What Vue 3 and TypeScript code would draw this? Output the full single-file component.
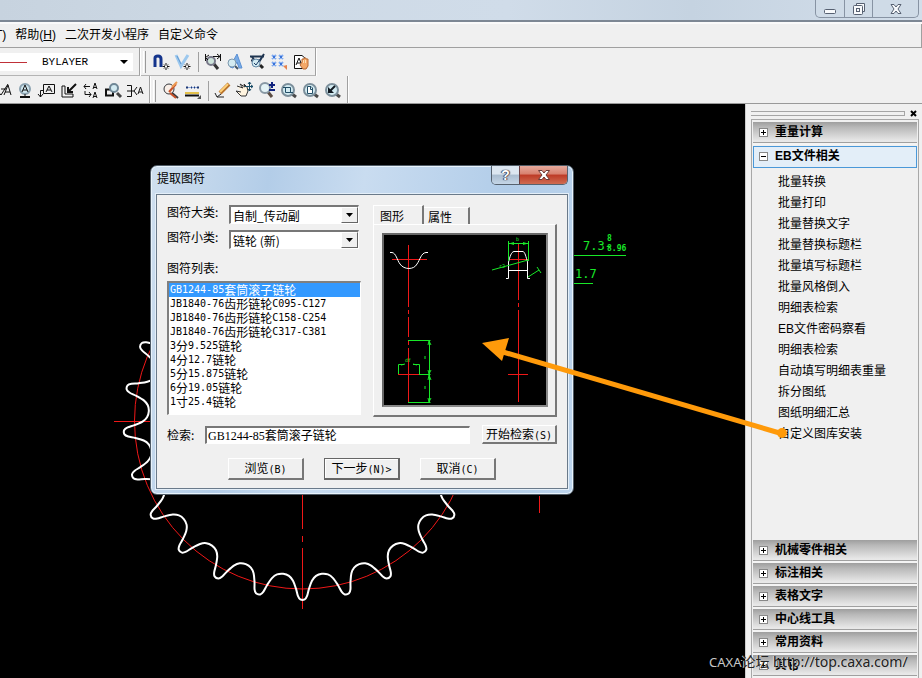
<script setup lang="ts">
import { ref } from 'vue'

interface Shape { d: string; s?: string; f?: string; w?: number }
interface Tool { name: string; shapes: Shape[] }

const lens = (x: number, y: number, r: number): string =>
  `M${x - r} ${y}a${r} ${r} 0 1 0 ${2 * r} 0a${r} ${r} 0 1 0 ${-2 * r} 0`
const INK = '#111'
const STEEL = '#6f8796'
const GLASS = '#d3ebf2'

const zoomGlass = (extra: Shape[]): Shape[] => [
  { d: 'M13 13L17 16', s: '#4a4a4a', w: 3 },
  { d: lens(9, 9, 6), s: '#7c8f9b', f: GLASS, w: 2 },
  ...extra,
]

const snapTools: Tool[] = [
  { name: '捕捉', shapes: [
    { d: 'M4 15V6Q4 4 7 4T10 7V15', s: '#14348c', w: 3 },
    { d: 'M15 11V18M11.500 14.500H18.500M13 12.500L17 16.500M17 12.500L13 16.500', s: INK },
    { d: 'M14 13.500H16V15.500H14Z', f: '#fff' } ] },
  { name: '导航', shapes: [
    { d: 'M3 3L8 14L15 3', s: '#9cc8ee', w: 3 }, { d: 'M4 4L8 12', s: '#5f97d0' },
    { d: 'M14 11V18M10.500 14.500H17.500M12 12.500L16 16.500M16 12.500L12 16.500', s: INK },
    { d: 'M13 13.500H15V15.500H13Z', f: '#fff' } ] },
]
const queryTools: Tool[] = [
  { name: '两点距离', shapes: [
    { d: 'M11 12L15 17', s: '#333', w: 3 }, { d: lens(8, 9, 4), s: '#778', f: '#cfe5dc', w: 2 },
    { d: 'M2.500 2V9M17.500 2V9M10 4.500H17M14 2L17 4.500L14 7M6 3L2.500 5.500L5 8', s: INK } ] },
  { name: '角度', shapes: [
    { d: 'M5 15L12 2L17 16H14L12 10L8 16Z', f: '#78abe6', s: '#5a90d4' },
    { d: 'M10 14L13 17', s: '#456', w: 2 }, { d: lens(7, 11, 4), s: '#7c97ad', f: GLASS } ] },
  { name: '坐标', shapes: [
    { d: 'M3 4.500H17M4 8.500H12M5 5L9 10M12 10L17 2', s: '#1f3550', w: 2 }, { d: 'M13 13L16 16', s: '#222', w: 3 },
    { d: lens(9, 11, 4), s: '#6287a5', f: GLASS }, { d: 'M7 11L9 13L14 6', s: '#1d3d66' } ] },
  { name: '属性', shapes: [
    { d: 'M3 3L7 7M7 3L3 7M10 3L14 7M14 3L10 7M3 10L7 14M7 10L3 14M10 10L14 14M14 10L10 14', s: '#7faaf0', w: 2 },
    { d: 'M4 5H6M11 5H13M4 12H6M11 12H13', s: '#3a73d8', w: 2 },
    { d: 'M14 14L18 13V18Z', f: '#e58450' } ] },
  { name: '拾取', shapes: [
    { d: 'M3.500 3.500H11L15 7V16.500H3.500Z', s: INK, f: '#fff' }, { d: 'M5 13L8 6L10 11M6 11H10', s: INK },
    { d: 'M9 13L11 10V7H13V6H15V7H17V14L15 17H12Z', f: '#f4a868', s: '#b86a34' }, { d: 'M12.500 8V11M14.500 8V11', s: '#ffe0b5' } ] },
]
const markTools: Tool[] = [
  { name: '粗糙度', shapes: [{ d: 'M1 6L8 14L15 3M8 8H13M11 14L15 4L18 14M12 11H17', s: INK }] },
  { name: '基准代号', shapes: [
    { d: lens(10, 8, 5), s: '#8ba2b0', f: '#cfe6ee', w: 2 }, { d: 'M7 11L10 4L13 11M8 9H12M10 13V16', s: INK },
    { d: 'M5 16H15', s: INK, w: 2 } ] },
  { name: '形位公差', shapes: [{ d: 'M6.500 3.500H17.500V12.500H6.500ZM9 11L12 5L15 11M10 9H14M6.500 9.500H3.500V16M1 13L3.500 16L6 13', s: INK }] },
  { name: '焊接符号', shapes: [{ d: 'M3 5V16H14V13H6V5Z', s: INK }, { d: 'M17 3L10 10M9 6V11H14', s: INK, w: 2 }] },
  { name: '剖切符号', shapes: [{ d: 'M3 5.500H9M5 3L3 5.500L5 8M4 10V13.500H10M8 11L10 13.500L8 16M12 8L14 2L16 8M13 6.500H16M12 17L14 11L16 17M13 15.500H16', s: INK }] },
  { name: '局部放大', shapes: [
    { d: 'M3 8.500H10V14.500H3Z', s: INK, w: 2 }, { d: 'M14 12L18 16', s: '#444', w: 3 },
    { d: lens(11, 7, 4), s: STEEL, f: GLASS, w: 2 } ] },
  { name: '引出说明', shapes: [{ d: 'M2 4.500H6.500V15.500H2M2 10H9M12 6L9 10L12 14M13 13L15.500 6L18 13M14 11H17', s: INK }] },
]
const editTools: Tool[] = [
  { name: '重画', shapes: [
    { d: 'M10 11L17 17', s: '#35383d', w: 2 }, { d: lens(8, 8, 5), s: '#35383d', f: '#f9efe8' },
    { d: 'M8 11L15 3M9 12L15 17', s: '#c65129', w: 2 }, { d: 'M11 6L16 1', s: '#ed9a52', w: 2 } ] },
  { name: '线宽', shapes: [
    { d: 'M3 6.500H16', s: '#8da8dc' }, { d: 'M3 6.500H5M8 6.500H9M11 6.500H12M14 6.500H16', s: '#1c3774', w: 2 },
    { d: 'M2 12H16', s: '#e4c14a', w: 2 }, { d: 'M2 14.500H16', s: INK, w: 2 }, { d: 'M18 14V18H14Z', f: '#555' } ] },
]
const viewTools: Tool[] = [
  { name: '画笔', shapes: [
    { d: 'M7 12L16 3', s: '#b8732c', w: 4 }, { d: 'M7 11L15 3', s: '#ffd179', w: 2 },
    { d: 'M2 12L4 16L8 13', s: '#222' }, { d: 'M4 16H11', s: '#222' } ] },
  { name: '平移', shapes: [
    { d: 'M2 5L8 7L5 3L10 6L9 3L12 6L13 10L11 15H6L3 12L1 10L6 11', s: '#333', f: '#fff4df' },
    { d: 'M14.500 1V10M10 5.500H18M13 3L14.500 1L16 3M16 4L18 5.500L16 7M13 8L14.500 10L16 8', s: '#174a65' } ] },
  { name: '缩放', shapes: [
    { d: 'M11 11L15 16', s: '#5c4d43', w: 3 }, { d: lens(8, 7, 5), s: '#8898a4', f: '#e4f3f6', w: 2 },
    { d: 'M12 4H18M15 1V7M12 9H18', s: '#11237e', w: 2 } ] },
  { name: '窗口缩放', shapes: zoomGlass([{ d: 'M6.500 6.500H11.500V11.500H6.500ZM4 6.500H7M11 11.500H14', s: '#234e66' }]) },
  { name: '显示全部', shapes: zoomGlass([{ d: 'M6.500 5.500H10L11.500 7V12.500H6.500ZM9.500 6V8.500H11', s: '#234e66', f: '#fff' }]) },
  { name: '显示上一步', shapes: zoomGlass([{ d: 'M7 10L12 5', s: '#101820', w: 2 }, { d: 'M5 6V12H11Z', f: '#101820' }]) },
]

const lineType = ref('BYLAYER')
const category = ref('自制_传动副')
const subCategory = ref('链轮 (新)')
const query = ref('GB1244-85套筒滚子链轮')
const selected = ref(0)
const tab = ref('图形')
const symbols: string[] = [
  'GB1244-85套筒滚子链轮', 'JB1840-76齿形链轮C095-C127', 'JB1840-76齿形链轮C158-C254',
  'JB1840-76齿形链轮C317-C381', '3分9.525链轮', '4分12.7链轮', '5分15.875链轮', '6分19.05链轮', '1寸25.4链轮',
]
const runs = (t: string): string[] => t.match(/[\x20-\x7e]+|[^\x20-\x7e]+/g) ?? []
const isLatin = (t: string): boolean => /^[\x20-\x7e]/.test(t)

const commands: string[] = [
  '批量转换', '批量打印', '批量替换文字', '批量替换标题栏', '批量填写标题栏', '批量风格倒入', '明细表检索',
  'EB文件密码察看', '明细表检索', '自动填写明细表重量', '拆分图纸', '图纸明细汇总', '自定义图库安装',
]
const sections: string[] = ['机械零件相关', '标注相关', '表格文字', '中心线工具', '常用资料', '其它']

/* Closed sprocket outline: one tooth profile repeated around the pitch circle. */
function sprocket(cx: number, cy: number, teeth: number): string {
  const profile: [number, number][] = [
    [-7.2, 154], [-5, 155.5], [-3.4, 160], [-2.2, 168], [-1.5, 175], [-0.7, 178.5],
    [0.7, 178.5], [1.5, 175], [2.2, 168], [3.4, 160], [5, 155.5],
  ]
  const pts: [number, number][] = []
  for (let t = 0; t < teeth; t++) {
    for (const [a, r] of profile) {
      const q = ((t * 360) / teeth + a) * (Math.PI / 180)
      pts.push([cx + r * Math.sin(q), cy + r * Math.cos(q)])
    }
  }
  const n = pts.length
  const at = (i: number): [number, number] => pts[(i + n) % n]
  let d = `M${at(0)[0]} ${at(0)[1]}`
  for (let i = 0; i < n; i++) {
    const [a, b, c, e] = [at(i - 1), at(i), at(i + 1), at(i + 2)]
    d += `C${b[0] + (c[0] - a[0]) / 6} ${b[1] + (c[1] - a[1]) / 6} ${c[0] - (e[0] - b[0]) / 6} ${c[1] - (e[1] - b[1]) / 6} ${c[0]} ${c[1]}`
  }
  return d + 'Z'
}
const gear = sprocket(302.5, 317, 25)
</script>

<template>
  <div class="app">
    <header class="titlebar">
      <div class="winbtns">
        <button aria-label="最小化"><svg width="16" height="14"><rect x="2.500" y="7.500" width="11" height="4" rx="1" class="glyph" /></svg></button>
        <button aria-label="还原"><svg width="16" height="14"><path d="M5.500 3V1.500H13.500V9.500H12" class="glyph" /><rect x="2.500" y="3.500" width="9" height="9" rx="1" class="glyph" /><rect x="5.500" y="6.500" width="3" height="3" class="glyph" /></svg></button>
        <button class="wide" aria-label="关闭"><svg width="16" height="14"><path d="M3 2.500H6L8 5L10 2.500H13L10 7L13 11.500H10L8 9L6 11.500H3L6 7Z" class="glyph" /></svg></button>
      </div>
    </header>
    <nav class="menubar">
      <a href="#">T)</a><a href="#">帮助(<u>H</u>)</a><a href="#">二次开发小程序</a><a href="#">自定义命令</a>
    </nav>
    <div class="toolrow">
      <div class="band first">
        <span class="linesample"></span>
        <select v-model="lineType" class="layer" aria-label="线型"><option>BYLAYER</option></select>
        <svg class="caret" width="8" height="4"><path d="M0 0H8L4 4Z" /></svg>
      </div>
      <div class="band">
        <i class="grip"></i>
        <button v-for="t in snapTools" :key="t.name" class="tool" :aria-label="t.name"><svg width="20" height="20" viewBox="0 0 20 20"><path v-for="(p, i) in t.shapes" :key="i" :d="p.d" :fill="p.f ?? 'none'" :stroke="p.s ?? 'none'" :stroke-width="p.w ?? 1" /></svg></button>
        <i class="sep"></i>
        <button v-for="t in queryTools" :key="t.name" class="tool" :aria-label="t.name"><svg width="20" height="20" viewBox="0 0 20 20"><path v-for="(p, i) in t.shapes" :key="i" :d="p.d" :fill="p.f ?? 'none'" :stroke="p.s ?? 'none'" :stroke-width="p.w ?? 1" /></svg></button>
      </div>
    </div>
    <div class="toolrow lower">
      <div class="band marks">
        <button v-for="t in markTools" :key="t.name" class="tool" :aria-label="t.name"><svg width="20" height="20" viewBox="0 0 20 20"><path v-for="(p, i) in t.shapes" :key="i" :d="p.d" :fill="p.f ?? 'none'" :stroke="p.s ?? 'none'" :stroke-width="p.w ?? 1" /></svg></button>
      </div>
      <div class="band">
        <i class="grip"></i>
        <button v-for="t in editTools" :key="t.name" class="tool" :aria-label="t.name"><svg width="20" height="20" viewBox="0 0 20 20"><path v-for="(p, i) in t.shapes" :key="i" :d="p.d" :fill="p.f ?? 'none'" :stroke="p.s ?? 'none'" :stroke-width="p.w ?? 1" /></svg></button>
        <i class="sep"></i>
        <button v-for="t in viewTools" :key="t.name" class="tool" :aria-label="t.name"><svg width="20" height="20" viewBox="0 0 20 20"><path v-for="(p, i) in t.shapes" :key="i" :d="p.d" :fill="p.f ?? 'none'" :stroke="p.s ?? 'none'" :stroke-width="p.w ?? 1" /></svg></button>
      </div>
    </div>

    <div class="work">
      <main class="canvas">
        <svg class="drawing" width="745" height="574">
          <circle cx="302.500" cy="317" r="168" class="red" />
          <path d="M114 317.500H302M302.500 317V425M302.500 432V438M302.500 444V505M539.500 392V409" class="red" />
          <path :d="gear" class="white" />
          <path d="M574 151.500H626M574 179.500H593" class="green" />
          <text x="583" y="146" class="dim">7.3-</text>
          <text x="575" y="174" class="dim">1.7</text>
          <text x="607" y="137" class="tol">8</text>
          <text x="607" y="147" class="tol">8.96</text>
        </svg>
      </main>
      <aside class="side">
        <div class="sidegrip">
          <span></span>
          <button aria-label="关闭面板"><svg width="7" height="7"><path d="M1 1L6 6M6 1L1 6" stroke="#000" stroke-width="2" /></svg></button>
        </div>
        <div class="tree">
          <button class="section"><svg width="9" height="9"><rect x="0.500" y="0.500" width="8" height="8" class="box" /><path d="M2 4.500H7M4.500 2V7" stroke="#000" /></svg>重量计算</button>
          <button class="section open"><svg width="9" height="9"><rect x="0.500" y="0.500" width="8" height="8" class="box" /><path d="M2 4.500H7" stroke="#000" /></svg>EB文件相关</button>
          <ul class="commands"><li v-for="(c, i) in commands" :key="i"><a href="#">{{ c }}</a></li></ul>
          <button v-for="s in sections" :key="s" class="section"><svg width="9" height="9"><rect x="0.500" y="0.500" width="8" height="8" class="box" /><path d="M2 4.500H7M4.500 2V7" stroke="#000" /></svg>{{ s }}</button>
        </div>
      </aside>
    </div>

    <section class="dialog" role="dialog" aria-labelledby="dlg-title">
      <div class="dlgbar">
        <span id="dlg-title">提取图符</span>
        <div class="dlgbtns">
          <button class="help" aria-label="帮助">?</button>
          <button class="close" aria-label="关闭"><svg width="14" height="12"><path d="M1.500 1.500H5L7 4L9 1.500H12.500L9 6L12.500 10.500H9L7 8L5 10.500H1.500L5 6Z" fill="#fff" stroke="#6b3a38" /></svg></button>
        </div>
      </div>
      <div class="client">
        <div class="upper">
          <div class="left">
            <div class="field"><label for="cat">图符大类:</label><span class="combo"><select id="cat" v-model="category"><option>自制_传动副</option></select><span class="drop"><svg width="7" height="4"><path d="M0 0H7L3.500 4Z" /></svg></span></span></div>
            <div class="field"><label for="sub">图符小类:</label><span class="combo"><select id="sub" v-model="subCategory"><option>链轮 (新)</option></select><span class="drop"><svg width="7" height="4"><path d="M0 0H7L3.500 4Z" /></svg></span></span></div>
            <div id="list-label" class="listlabel">图符列表:</div>
            <ul class="list" role="listbox" aria-labelledby="list-label">
              <li v-for="(s, i) in symbols" :key="s" role="option" :aria-selected="i === selected" :class="{ on: i === selected }" @click="selected = i"><span v-for="(r, k) in runs(s)" :key="k" :class="{ mono: isLatin(r) }">{{ r }}</span></li>
            </ul>
          </div>
          <div class="right">
            <div class="tabs" role="tablist">
              <button v-for="t in ['图形', '属性']" :key="t" role="tab" :aria-selected="tab === t" :class="{ active: tab === t }" @click="tab = t">{{ t }}</button>
            </div>
            <div class="page">
              <svg class="preview" viewBox="0 0 162 170">
                <path d="M24.500 10V72M24.500 75V79M24.500 82V102M24.500 106V110M24.500 113V167M8 24.500H43M14 139.500H35M134.500 9V65M134.500 68V72M134.500 75V167M124 139.500H144M126 24.500H144" class="red" />
                <path d="M6 17.500H8C12 18 13 25 16 29C20 35 30 35 33 29C36 25 37 18 42 17.500H44M122 43.500H124.500V27C126 22 127 17 130 16.500H139C141 17 142 22 143.500 27V43.500H146M124.500 35.500H143.500" class="white thin" />
                <path d="M24 105.500H46.500M45.500 105.500V167.500M24 167.500H46.500M35 139.500H46.500M14.500 139V129.500H20M29 129.500H35.500V139M17 130L21 129M33 130L29 129M124.500 6V26M144.500 6V26M124.500 8.500H144.500M108 35L144 25M144 42L155 35M153 32L157 38M44 110L45 106L47 110M44 135L45 139L47 135M44 145L45 140L47 145M44 163L45 167L47 163M41 121V124M41 151V154" class="green" />
                <path d="M125 8.500L130 7V10ZM144 8.500L139 7V10Z" class="greenfill" />
                <text x="132" y="6" class="tiny">b</text><text x="21" y="127" class="tiny">df</text><text x="115" y="33" class="tiny">r2</text>
              </svg>
            </div>
          </div>
        </div>
        <div class="search">
          <label for="q">检索:</label>
          <input id="q" v-model="query" type="text" />
          <button class="btn">开始检索<span class="mono">(S)</span></button>
        </div>
        <div class="actions">
          <button class="btn">浏览<span class="mono">(B)</span></button>
          <button class="btn default">下一步<span class="mono">(N)&gt;</span></button>
          <button class="btn">取消<span class="mono">(C)</span></button>
        </div>
      </div>
    </section>

    <svg class="arrow" width="320" height="110">
      <path d="M28 17L308 99" stroke="#ff9a0a" stroke-width="5" />
      <path d="M7 8L34 3L27 26Z" fill="#ff9a0a" /><circle cx="307" cy="98" r="5" fill="#ff9a0a" />
    </svg>
    <div class="mark"><span class="pale">CAXA</span>论坛 http://top.caxa.com/</div>
  </div>
</template>

<style>
body { margin: 0; overflow: hidden; }
</style>

<style scoped>
* { box-sizing: border-box; }
.app {
  position: relative; display: flex; flex-direction: column; height: 100vh; overflow: hidden;
  background: #f0f0f0; color: #000; font: 12px/16px "Liberation Sans", "Noto Sans CJK SC", sans-serif;
}
button { margin: 0; padding: 0; border: 0; background: none; color: inherit; font: inherit; }
a { color: inherit; text-decoration: none; }
ul { margin: 0; padding: 0; list-style: none; }
.red { fill: none; stroke: #f01818; }
.green { fill: none; stroke: #18e828; }
.greenfill { fill: #18e828; }
.white { fill: none; stroke: #fff; stroke-width: 2; }
.white.thin { stroke-width: 1; }
.tiny { fill: #18e828; font: 5px "DejaVu Sans Mono", monospace; }

.titlebar {
  display: flex; justify-content: flex-end; flex: none; height: 24px; padding-right: 3px;
  border-bottom: 2px solid #fafafa; box-shadow: inset 0 -2px #7d8794;
  background: linear-gradient(90deg, #c7d3df, #cedae6 30%, #d0dce9 55%, #c5d3e1 75%, #d3deea);
}
.winbtns { display: flex; height: 18px; border: 1px solid #8793a3; border-top: 0; border-radius: 0 0 5px 5px; background: #cfdbe7; }
.winbtns button { display: flex; align-items: center; justify-content: center; width: 28px; }
.winbtns button + button { border-left: 1px solid #8793a3; }
.winbtns .wide { width: 46px; }
.glyph { fill: #f8fafc; stroke: #566071; }

.menubar { display: flex; flex: none; gap: 9px; height: 24px; padding-bottom: 2px; align-items: center; border-bottom: 1px solid #a0a0a0; border-right: 1px solid #a0a0a0; }
.menubar a:first-child { margin-left: -5px; }

.toolrow { display: flex; flex: none; height: 28px; }
.toolrow.lower { height: 27px; }
.band { display: flex; align-items: center; padding-right: 3px; border-right: 1px solid #a0a0a0; border-bottom: 1px solid #b4b4b4; box-shadow: 1px 0 #fff; }
.lower .band { padding-top: 2px; border-bottom: 0; }
.band.first { position: relative; width: 140px; padding-right: 6px; }
.band.marks { width: 150px; overflow: hidden; }
.marks .tool:first-child { margin-left: -8px; }
.linesample { width: 28px; height: 18px; background: linear-gradient(#c03038, #c03038) 0 9px / 27px 1px no-repeat #fff; }
.layer { flex: 1; height: 18px; padding: 0 0 0 14px; border: 0; appearance: none; background: #fff; color: #000; font: 11px "Liberation Mono", monospace; }
.caret { position: absolute; right: 11px; top: 12px; pointer-events: none; }
.grip { width: 3px; height: 22px; margin: 0 4px 0 3px; border-left: 1px solid #fff; border-right: 1px solid #999; }
.sep { width: 1px; height: 20px; margin: 0 3px 0 4px; background: #a0a0a0; }
.tool { flex: none; width: 22px; height: 20px; }
.tool svg { display: block; margin: 0 auto; }

.work { display: flex; flex: 1; min-height: 0; border-top: 1px solid #999; }
.canvas { flex: 1; min-width: 0; overflow: hidden; background: #000; }
.drawing { display: block; }
.dim { fill: #18e828; font: 12px "DejaVu Sans Mono", monospace; }
.tol { fill: #18e828; font: bold 8px "DejaVu Sans Mono", monospace; }

.side { display: flex; flex-direction: column; width: 177px; padding: 3px 3px 0 5px; border-left: 1px solid #ccc; }
.sidegrip { display: flex; flex: none; align-items: center; height: 12px; padding-right: 2px; gap: 5px; }
.sidegrip span { flex: 1; height: 5px; border: 1px solid #a5a5a5; border-left: 0; }
.sidegrip button { display: flex; width: 7px; }
.tree { display: flex; flex-direction: column; flex: 1; min-height: 0; padding: 2px 1px 0; border: 1px solid #a8a8a8; border-bottom: 0; overflow: hidden; }
.section {
  display: flex; flex: none; align-items: center; gap: 7px; height: 23px; padding: 0 0 1px 6px; font-weight: bold; text-align: left;
  border-bottom: 2px solid #f4f4f4; box-shadow: inset 0 -1px #a0a0a0; background: linear-gradient(#9e9e9e, #b8b8b8 25%, #e8e8e8 90%);
}
.section.open { height: 22px; margin-top: 1px; padding: 0 0 2px 5px; border: 1px solid #4a98d8; background: #e3eef8; box-shadow: none; }
.box { fill: #fff; stroke: #888; }
.commands { flex: 1; padding: 4px 0 0 25px; }
.commands li { height: 21px; line-height: 21px; white-space: nowrap; }

.dialog {
  position: absolute; left: 150px; top: 165px; width: 424px; padding: 0 5px 5px; border: 1px solid #4f5b66; border-radius: 7px;
  background: linear-gradient(100deg, #cfdfef, #b3cde8 25%, #c9dcf0 45%, #b2cde9 75%, #bcd4ec); box-shadow: inset 0 0 0 1px #e8f3fc;
  font-family: "Noto Sans CJK SC", sans-serif;
}
.dlgbar { display: flex; justify-content: space-between; height: 28px; }
.dlgbar span { padding: 4px 0 0 1px; }
.dlgbtns { display: flex; height: 19px; border: 1px solid #56626f; border-top: 0; border-radius: 0 0 5px 5px; overflow: hidden; }
.help { width: 27px; background: linear-gradient(#dce6f0 45%, #a9bccf 50%, #c5d6e7); color: #fff; font: bold 14px "Liberation Sans", sans-serif; text-shadow: 0 0 1px #223, 1px 0 1px #445, -1px 0 1px #445; }
.close { display: flex; align-items: center; justify-content: center; width: 48px; border-left: 1px solid #6d3f42; background: linear-gradient(#e6aa9d, #d8806e 45%, #bd3a26 50%, #cf6c52); }
.client { padding: 10px 10px 8px; border: 1px solid #6a7a8a; background: #f0f0f0; box-shadow: 0 0 0 1px #e4eff9; }
.upper { display: flex; gap: 12px; }
.left { width: 194px; }
.field { display: flex; justify-content: space-between; align-items: center; height: 19px; margin-bottom: 6px; padding-right: 2px; }
.field label { height: 19px; line-height: 14px; }
.combo { display: flex; width: 130px; height: 19px; background: #fff; border: 1px solid #fff; border-top: 2px solid #777; border-left: 2px solid #777; }
.combo select { flex: 1; min-width: 0; padding: 0 0 0 2px; border: 0; appearance: none; background: #fff; color: #000; font: 12px/15px "Noto Sans CJK SC", sans-serif; }
.drop { display: flex; align-items: center; justify-content: center; width: 17px; background: #f0f0f0; border: 1px solid #fff; border-right-color: #666; border-bottom-color: #666; pointer-events: none; }
.listlabel { height: 26px; line-height: 26px; }
.list { height: 134px; border: 1px solid #fff; border-top: 2px solid #808080; border-left: 2px solid #808080; background: #fff; }
.list li { display: flex; align-items: center; height: 14px; padding-left: 1px; line-height: 14px; }
.list .on { background: #3399ff; color: #fff; }
.mono { font-family: "DejaVu Sans Mono", monospace; font-size: 10px; }

.right { flex: 1; display: flex; flex-direction: column; }
.tabs { display: flex; align-items: flex-end; height: 19px; }
.tabs button { width: 46px; height: 17px; padding-right: 12px; border-top: 1px solid #fff; border-right: 2px solid #777; line-height: 15px; }
.tabs .active { width: 51px; height: 19px; border-left: 1px solid #fff; line-height: 17px; }
.page { flex: 1; padding: 8px 7px 8px 8px; border: 2px solid #777; border-top: 1px solid #fff; border-left: 1px solid #fff; }
.preview { display: block; width: 100%; border: 2px solid #686868; border-right-color: #888; border-bottom-color: #888; background: #000; }
.search { display: flex; align-items: center; margin-top: 8px; }
.search label { width: 38px; }
.search input { flex: 1; min-width: 0; height: 18px; margin-right: 12px; padding: 0 1px; border: 1px solid #fff; border-top: 2px solid #777; border-left: 2px solid #777; font: 12px "Liberation Serif", "Noto Sans CJK SC", sans-serif; }
.btn { width: 75px; height: 19px; border: 1px solid #fff; border-right: 2px solid #777; border-bottom: 2px solid #777; line-height: 16px; white-space: nowrap; }
.actions { display: flex; justify-content: center; gap: 20px; margin-top: 14px; }
.actions .btn { width: 76px; height: 22px; line-height: 18px; }
.actions .default { border: 1px solid #666; border-right-width: 2px; border-bottom-width: 2px; box-shadow: inset 1px 1px #fff; }

.arrow { position: absolute; left: 475px; top: 335px; pointer-events: none; }
.mark { position: absolute; left: 709px; top: 653px; font: 14px/18px "Noto Sans", "Noto Sans CJK SC", sans-serif; color: #222; text-shadow: -1px 0 #ddd; white-space: nowrap; pointer-events: none; }
.pale { color: #c8c8c8; font-size: 13px; text-shadow: none; }
</style>
